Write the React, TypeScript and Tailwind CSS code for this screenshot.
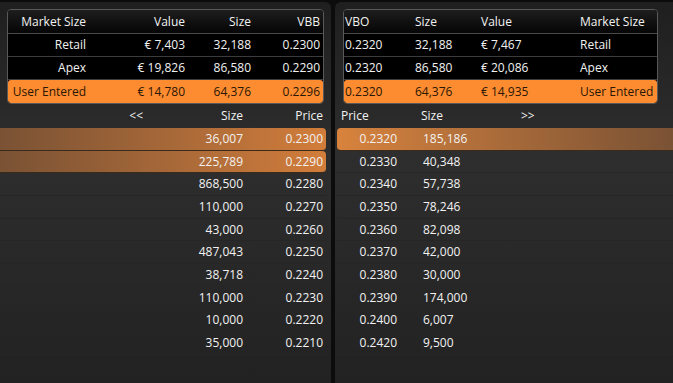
const bids = [
  ["36,007", "0.2300"],
  ["225,789", "0.2290"],
  ["868,500", "0.2280"],
  ["110,000", "0.2270"],
  ["43,000", "0.2260"],
  ["487,043", "0.2250"],
  ["38,718", "0.2240"],
  ["110,000", "0.2230"],
  ["10,000", "0.2220"],
  ["35,000", "0.2210"],
];

const offers = [
  ["0.2320", "185,186"],
  ["0.2330", "40,348"],
  ["0.2340", "57,738"],
  ["0.2350", "78,246"],
  ["0.2360", "82,098"],
  ["0.2370", "42,000"],
  ["0.2380", "30,000"],
  ["0.2390", "174,000"],
  ["0.2400", "6,007"],
  ["0.2420", "9,500"],
];

const leftSummary = [
  ["Retail", "€ 7,403", "32,188", "0.2300"],
  ["Apex", "€ 19,826", "86,580", "0.2290"],
];

const rightSummary = [
  ["0.2320", "32,188", "€ 7,467", "Retail"],
  ["0.2320", "86,580", "€ 20,086", "Apex"],
];

const leftCols = "grid grid-cols-[78px_99px_66px_69px] text-right";
const rightCols = "grid grid-cols-[70px_66px_99px_1fr] pl-[1px]";

export default function App() {
  return (
    <div
      className="w-[673px] h-[383px] overflow-hidden bg-[#0c0c0c] flex gap-[4px] pt-[2px] text-[12px] text-[#f2f2f2] leading-none"
      style={{ fontFamily: '"Open Sans", "Noto Sans", sans-serif' }}
    >
      {/* bid side */}
      <div className="w-[331px] shrink-0 rounded-tr-[6px] bg-gradient-to-b from-[#1f1f1f] via-[#2e2e2e] via-40% to-[#222222] flex flex-col">
        <div className="mx-[7px] mt-[7px] border border-[#595959] rounded-[4px] bg-black overflow-hidden">
          <div className={`${leftCols} h-[24px] items-center bg-gradient-to-b from-[#1e1e1e] to-[#060606] border-b border-[#4a4a4a]`}>
            <span>Market Size</span>
            <span>Value</span>
            <span>Size</span>
            <span>VBB</span>
          </div>
          {leftSummary.map((r) => (
            <div key={r[0]} className={`${leftCols} h-[23px] items-center border-b border-[#3c3c3c]`}>
              {r.map((c, i) => (
                <span key={i}>{c}</span>
              ))}
            </div>
          ))}
          <div className={`${leftCols} h-[23px] items-center bg-[#fd8b30] text-[#2a1705] rounded-[3px]`}>
            <span>User Entered</span>
            <span>€ 14,780</span>
            <span>64,376</span>
            <span>0.2296</span>
          </div>
        </div>

        <div className="h-[24px] flex items-center">
          <span className="w-[143px] text-right">&lt;&lt;</span>
          <span className="w-[100px] text-right">Size</span>
          <span className="w-[80px] text-right">Price</span>
        </div>

        <div className="flex flex-col">
          {bids.map(([size, price], i) => (
            <div
              key={i}
              className={
                i < 2
                  ? "h-[22.7px] mr-[5px] flex items-center rounded-r-[4px] bg-gradient-to-r from-[#7a5234] to-[#d27d3a] border-b border-[#3a2a1c]"
                  : "h-[22.7px] mr-[5px] flex items-center border-b border-[#262626]"
              }
            >
              <span className="w-[243px] text-right">{size}</span>
              <span className="w-[80px] text-right">{price}</span>
            </div>
          ))}
        </div>
      </div>

      {/* offer side */}
      <div className="flex-1 rounded-tl-[6px] bg-gradient-to-b from-[#1f1f1f] via-[#2e2e2e] via-40% to-[#222222] flex flex-col">
        <div className="ml-[8px] mr-[15px] mt-[7px] border border-[#595959] rounded-[4px] bg-black overflow-hidden">
          <div className={`${rightCols} h-[24px] items-center bg-gradient-to-b from-[#1e1e1e] to-[#060606] border-b border-[#4a4a4a]`}>
            <span>VBO</span>
            <span>Size</span>
            <span>Value</span>
            <span>Market Size</span>
          </div>
          {rightSummary.map((r) => (
            <div key={r[3]} className={`${rightCols} h-[23px] items-center border-b border-[#3c3c3c]`}>
              {r.map((c, i) => (
                <span key={i}>{c}</span>
              ))}
            </div>
          ))}
          <div className={`${rightCols} h-[23px] items-center bg-[#fd8b30] text-[#2a1705] rounded-[3px]`}>
            <span>0.2320</span>
            <span>64,376</span>
            <span>€ 14,935</span>
            <span>User Entered</span>
          </div>
        </div>

        <div className="h-[24px] flex items-center pl-[6px]">
          <span className="w-[80px]">Price</span>
          <span className="w-[100px]">Size</span>
          <span>&gt;&gt;</span>
        </div>

        <div className="flex flex-col">
          {offers.map(([price, size], i) => (
            <div
              key={i}
              className={
                i === 0
                  ? "h-[22.7px] ml-[2px] flex items-center rounded-l-[4px] bg-gradient-to-r from-[#d8833d] to-[#7a5234] border-b border-[#3a2a1c]"
                  : "h-[22.7px] ml-[2px] flex items-center border-b border-[#262626]"
              }
            >
              <span className="w-[60px] text-right">{price}</span>
              <span className="pl-[26px]">{size}</span>
            </div>
          ))}
        </div>
      </div>
    </div>
  );
}
